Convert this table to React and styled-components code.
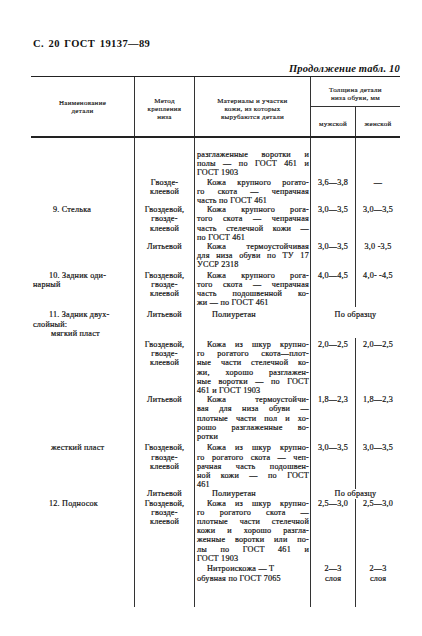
import React from 'react'
import styled, { createGlobalStyle } from 'styled-components'

const GlobalStyle = createGlobalStyle`
  body {
    margin: 0;
    background: #fff;
    color: #111;
    font-family: 'Liberation Serif', 'Times New Roman', serif;
  }
`

const Page = styled.div`
  width: 422px;
  height: 636px;
  box-sizing: border-box;
  padding: 37px 22px 0 31px;
`

const PageTitle = styled.div`
  margin-left: 2px;
  font-size: 10.5px;
  font-weight: 700;
  line-height: 14px;
  letter-spacing: 0.4px;
  word-spacing: 1.5px;
`

const Caption = styled.div`
  margin-top: 11px;
  text-align: right;
  font-size: 10.5px;
  font-style: italic;
  font-weight: 700;
  line-height: 13px;
  letter-spacing: 0.2px;
`

const cols = '104px 60px 116px 45px 44px'

const Head = styled.div`
  display: grid;
  grid-template-columns: ${cols};
  grid-template-rows: 30px 29px;
  border-top: 1px solid #222;
  border-bottom: 2px solid #222;
  margin-top: 1px;
  font-size: 7px;
  line-height: 8px;
  letter-spacing: 0.3px;
  -webkit-text-stroke: 0.15px #111;
`

const HeadCell = styled.div`
  grid-row: ${(p) => p.$row};
  grid-column: ${(p) => p.$col};
  display: flex;
  flex-direction: column;
  align-items: center;
  justify-content: ${(p) => p.$justify || 'center'};
  padding-top: ${(p) => p.$pt || 0}px;
  text-align: center;
  border-right: ${(p) => (p.$last ? 'none' : '1px solid #333')};
  border-bottom: ${(p) => (p.$under ? '1px solid #333' : 'none')};
`

const Body = styled.div`
  display: grid;
  grid-template-columns: ${cols};
  font-size: 8.2px;
  line-height: 9.2px;
  letter-spacing: 0.2px;
  -webkit-text-stroke: 0.2px #111;
`

const Cell = styled.div`
  grid-column: ${(p) => (p.$span ? 'span 2' : 'auto')};
  padding: ${(p) => p.$pt || 0}px 2px 0 2px;
  text-align: ${(p) => p.$align || 'left'};
  border-right: ${(p) => (p.$last ? 'none' : '1px solid #333')};
  min-height: ${(p) => p.$h || 0}px;
  white-space: nowrap;
`

const NameLine = styled.div`
  padding-left: ${(p) => p.$indent}px;
`

const MatLine = styled.div`
  display: flex;
  justify-content: ${(p) => (p.$end ? 'flex-start' : 'space-between')};
  gap: ${(p) => (p.$end ? '0.28em' : '2px')};
  padding-left: ${(p) => p.$indent || 0}px;
  margin-right: -1px;
  white-space: nowrap;
`

const rows = [
  {
    pt: 12,
    cont: true,
    mat: ['разглаженные воротки и', 'полы — по ГОСТ 461 и', 'ГОСТ 1903'],
  },
  {
    method: ['Гвозде-', 'клеевой'],
    mat: ['Кожа крупного рогато-', 'го скота — чепрачная', 'часть по ГОСТ 461'],
    m: '3,6—3,8',
    w: '—',
  },
  {
    name: [{ t: '9. Стелька', i: 20 }],
    method: ['Гвоздевой,', 'гвозде-', 'клеевой'],
    mat: ['Кожа крупного рога-', 'того скота — чепрачная', 'часть стелечной кожи —', 'по ГОСТ 461'],
    m: '3,0—3,5',
    w: '3,0—3,5',
  },
  {
    method: ['Литьевой'],
    mat: ['Кожа термоустойчивая', 'для низа обуви по ТУ 17', 'УССР 2318'],
    m: '3,0—3,5',
    w: '3,0 -3,5',
  },
  {
    pt: 1,
    name: [
      { t: '10. Задник оди-', i: 16 },
      { t: 'нарный', i: 0 },
    ],
    method: ['Гвоздевой,', 'гвозде-', 'клеевой'],
    mat: ['Кожа крупного рога-', 'того скота — чепрачная', 'часть подошвенной ко-', 'жи — по ГОСТ 461'],
    m: '4,0—4,5',
    w: '4,0- -4,5',
  },
  {
    pt: 3,
    name: [
      { t: '11. Задник двух-', i: 16 },
      { t: 'слойный:', i: 0 },
      { t: 'мягкий пласт', i: 18 },
    ],
    method: ['Литьевой'],
    mat: ['Полиуретан'],
    matIndent: 15,
    both: 'По образцу',
  },
  {
    pt: 2,
    method: ['Гвоздевой,', 'гвозде-', 'клеевой'],
    mat: [
      'Кожа из шкур крупно-',
      'го рогатого скота—плот-',
      'ные части стелечной ко-',
      'жи, хорошо разглажен-',
      'ные воротки — по ГОСТ',
      '461 и ГОСТ 1903',
    ],
    m: '2,0—2,5',
    w: '2,0—2,5',
  },
  {
    method: ['Литьевой'],
    mat: [
      'Кожа термоустойчи-',
      'вая для низа обуви —',
      'плотные части пол и хо-',
      'рошо разглаженные во-',
      'ротки',
    ],
    m: '1,8—2,3',
    w: '1,8—2,3',
  },
  {
    pt: 2,
    name: [{ t: 'жесткий пласт', i: 18 }],
    method: ['Гвоздевой,', 'гвозде-', 'клеевой'],
    mat: [
      'Кожа из шкур крупно-',
      'го рогатого скота — чеп-',
      'рачная часть подошвен-',
      'ной кожи — по ГОСТ',
      '461',
    ],
    m: '3,0—3,5',
    w: '3,0—3,5',
  },
  {
    method: ['Литьевой'],
    mat: ['Полиуретан'],
    matIndent: 15,
    both: 'По образцу',
  },
  {
    name: [{ t: '12. Подносок', i: 16 }],
    method: ['Гвоздевой,', 'гвозде-', 'клеевой'],
    mat: [
      'Кожа из шкур крупно-',
      'го рогатого скота —',
      'плотные части стелечной',
      'кожи и хорошо разгла-',
      'женные воротки или по-',
      'лы по ГОСТ 461 и',
      'ГОСТ 1903',
    ],
    m: '2,5—3,0',
    w: '2,5—3,0',
  },
  {
    pt: 1.5,
    method: [],
    mat: ['Нитроискожа — Т', 'обувная по ГОСТ 7065'],
    matEnds: true,
    m: ['2—3', 'слоя'],
    w: ['2—3', 'слоя'],
  },
]

const Lines = ({ value }) =>
  (Array.isArray(value) ? value : value ? [value] : []).map((v, i) => <div key={i}>{v}</div>)

const Material = ({ row }) =>
  row.mat.map((t, i) => {
    const end = i === row.mat.length - 1 || row.matEnds
    return (
      <MatLine key={i} $indent={i === 0 && !row.cont ? row.matIndent || 10 : 0} $end={end}>
        {t.split(' ').map((w, j) => (
          <span key={j}>{w}</span>
        ))}
      </MatLine>
    )
  })

const App = () => {
  return (
    <Page>
      <GlobalStyle />
      <PageTitle>С. 20 ГОСТ 19137—89</PageTitle>
      <Caption>Продолжение табл. 10</Caption>
      <Head>
        <HeadCell $row="1 / span 2" $col="1" $pt={1}>
          <div>Наименование</div>
          <div>детали</div>
        </HeadCell>
        <HeadCell $row="1 / span 2" $col="2" $pt={4}>
          <div>Метод</div>
          <div>крепления</div>
          <div>низа</div>
        </HeadCell>
        <HeadCell $row="1 / span 2" $col="3" $pt={4}>
          <div>Материалы и участки</div>
          <div>кожи, из которых</div>
          <div>вырубаются детали</div>
        </HeadCell>
        <HeadCell $row="1" $col="4 / span 2" $last $under $justify="flex-start" $pt={9}>
          <div>Толщина детали</div>
          <div>низа обуви, мм</div>
        </HeadCell>
        <HeadCell $row="2" $col="4" $pt={4}>
          <div>мужской</div>
        </HeadCell>
        <HeadCell $row="2" $col="5" $last $pt={4}>
          <div>женской</div>
        </HeadCell>
      </Head>
      <Body>
        {rows.map((row, i) => (
          <React.Fragment key={i}>
            <Cell $pt={row.pt}>
              {(row.name || []).map((n, j) => (
                <NameLine key={j} $indent={n.i}>
                  {n.t}
                </NameLine>
              ))}
            </Cell>
            <Cell $pt={row.pt} $align="center">
              <Lines value={row.method} />
            </Cell>
            <Cell $pt={row.pt}>
              <Material row={row} />
            </Cell>
            {row.both ? (
              <Cell $pt={row.pt} $align="center" $span $last>
                {row.both}
              </Cell>
            ) : (
              <>
                <Cell $pt={row.pt} $align="center">
                  <Lines value={row.m} />
                </Cell>
                <Cell $pt={row.pt} $align="center" $last>
                  <Lines value={row.w} />
                </Cell>
              </>
            )}
          </React.Fragment>
        ))}
        <Cell $h={24} />
        <Cell $h={24} />
        <Cell $h={24} />
        <Cell $h={24} />
        <Cell $h={24} $last />
      </Body>
    </Page>
  )
}

export default App
